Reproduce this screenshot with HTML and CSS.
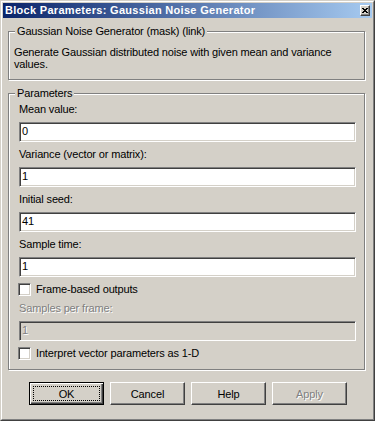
FILE: index.html
```html
<!DOCTYPE html>
<html>
<head>
<meta charset="utf-8">
<link rel="stylesheet" href="styles.css">
</head>
<body>
<div class="window">
  <div class="frame">
    <div class="titlebar">
      <span class="title">Block Parameters: Gaussian Noise Generator</span>
      <span class="close"><svg width="6" height="5" viewBox="0 0 6 5"><path d="M0 0L5 5M1 0L6 5M5 0L0 5M6 0L1 5" stroke="#000" stroke-width="1" fill="none" shape-rendering="crispEdges"/></svg></span>
    </div>
    <div class="body">
      <fieldset class="group group-desc">
        <legend>Gaussian Noise Generator (mask) (link)</legend>
        <p class="desc">Generate Gaussian distributed noise with given mean and variance<br>values.</p>
      </fieldset>
      <fieldset class="group group-params">
        <legend>Parameters</legend>
        <div class="params">
          <div class="field"><div class="label">Mean value:</div><div class="edit">0</div></div>
          <div class="field"><div class="label">Variance (vector or matrix):</div><div class="edit">1</div></div>
          <div class="field"><div class="label">Initial seed:</div><div class="edit">41</div></div>
          <div class="field"><div class="label">Sample time:</div><div class="edit">1</div></div>
          <div class="check"><span class="box"></span><span>Frame-based outputs</span></div>
          <div class="field disabled"><div class="label">Samples per frame:</div><div class="edit">1</div></div>
          <div class="check"><span class="box"></span><span>Interpret vector parameters as 1-D</span></div>
        </div>
      </fieldset>
      <div class="buttons">
        <button class="btn btn-default"><span>OK</span></button>
        <button class="btn">Cancel</button>
        <button class="btn">Help</button>
        <button class="btn btn-disabled">Apply</button>
      </div>
    </div>
  </div>
</div>
</body>
</html>
```

FILE: styles.css
```css
* { box-sizing: border-box; }
html, body { margin: 0; padding: 0; }
body {
  width: 375px;
  height: 421px;
  background: #D4D0C8;
  font-family: "Liberation Sans", Arial, sans-serif;
  font-size: 11px;
  letter-spacing: -0.15px;
  color: #000;
  overflow: hidden;
}
.window {
  width: 375px;
  height: 421px;
  border: 1px solid;
  border-color: #D4D0C8 #404040 #404040 #D4D0C8;
  background: #D4D0C8;
}
.frame {
  height: 100%;
  border: 1px solid;
  border-color: #fff #808080 #808080 #fff;
  padding: 1px;
  display: flex;
  flex-direction: column;
}
.titlebar {
  height: 15px;
  flex: none;
  display: flex;
  align-items: center;
  justify-content: space-between;
  padding: 0 2px 0 2px;
  background: linear-gradient(to right, #0A246A, #A6CAF0);
}
.title {
  color: #fff;
  font-weight: bold;
  line-height: 13px;
  letter-spacing: 0.3px;
  white-space: nowrap;
}
.close {
  width: 10px;
  height: 11px;
  display: flex;
  align-items: center;
  justify-content: center;
  background: #D4D0C8;
  border: 1px solid;
  border-color: #fff #404040 #404040 #fff;
  box-shadow: inset -1px -1px 0 #808080;
}
.close svg { display: block; }
.body {
  flex: 1;
  padding: 7px 7px 0 5px;
}
.group {
  margin: 0;
  min-width: 0;
  border: 1px solid #808080;
  box-shadow: inset 1px 1px 0 #fff, 1px 1px 0 #fff;
}
.group legend {
  margin-left: 6px;
  padding: 0 2px;
  line-height: 13px;
  background: #D4D0C8;
}
.group-desc {
  padding: 8px 0 9px 0;
}
.desc {
  margin: 0;
  padding-left: 5px;
  line-height: 12px;
  white-space: nowrap;
}
.group-params {
  margin-top: 7px;
  padding: 3px 0 9px 0;
}
.params {
  padding: 0 8px 0 10px;
}
.field { margin-bottom: 6px; }
.label {
  line-height: 13px;
  margin-bottom: 6px;
  white-space: nowrap;
}
.edit {
  height: 20px;
  line-height: 13px;
  padding: 2px 2px 0 2px;
  background: #fff;
  border: 1px solid;
  border-color: #808080 #fff #fff #808080;
  box-shadow: inset 1px 1px 0 #404040, inset -1px -1px 0 #D4D0C8;
}
.disabled .label,
.disabled .edit {
  color: #808080;
  text-shadow: 1px 1px 0 #fff;
}
.disabled .edit { background: #D4D0C8; }
.check {
  display: flex;
  align-items: center;
  gap: 5px;
  height: 13px;
  line-height: 13px;
  margin: 3px 0 6px -1px;
  white-space: nowrap;
}
.check:last-child { margin-bottom: 0; }
.box {
  width: 13px;
  height: 13px;
  flex: none;
  background: #fff;
  border: 1px solid;
  border-color: #808080 #fff #fff #808080;
  box-shadow: inset 1px 1px 0 #404040, inset -1px -1px 0 #D4D0C8;
}
.buttons {
  display: flex;
  gap: 6px;
  margin-top: 12px;
  padding-left: 21px;
}
.btn {
  width: 75px;
  height: 23px;
  margin: 0;
  padding: 0;
  font: inherit;
  letter-spacing: inherit;
  color: #000;
  background: #D4D0C8;
  border: 1px solid;
  border-color: #fff #404040 #404040 #fff;
  box-shadow: inset -1px -1px 0 #808080;
  border-radius: 0;
  appearance: none;
  -webkit-appearance: none;
}
.btn-default {
  border-color: #000;
  box-shadow: inset 1px 1px 0 #fff, inset -1px -1px 0 #404040, inset -2px -2px 0 #808080;
  outline: 1px dotted #000;
  outline-offset: -5px;
}
.btn-disabled {
  color: #808080;
  text-shadow: 1px 1px 0 #fff;
}
```
